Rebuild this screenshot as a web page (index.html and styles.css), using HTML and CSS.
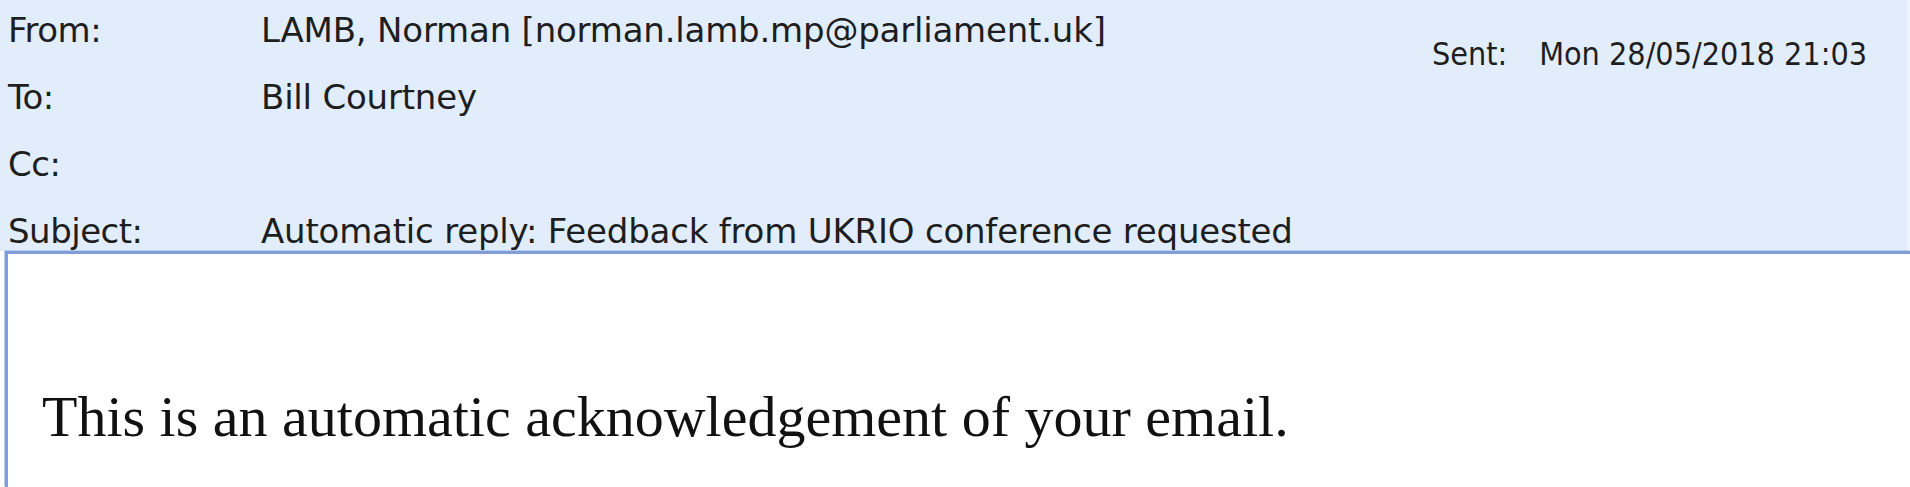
FILE: index.html
```html
<!DOCTYPE html>
<html lang="en">
<head>
    <meta charset="UTF-8">
    <title>Automatic reply: Feedback from UKRIO conference requested</title>
    <link rel="stylesheet" href="styles.css">
</head>
<body>

<div class="header">
    <div class="fields">
        <div class="row"><span class="label">From:</span><span class="value">LAMB, Norman [norman.lamb.mp@parliament.uk]</span></div>
        <div class="row"><span class="label">To:</span><span class="value">Bill Courtney</span></div>
        <div class="row"><span class="label">Cc:</span><span class="value"></span></div>
        <div class="row"><span class="label">Subject:</span><span class="value">Automatic reply: Feedback from UKRIO conference requested</span></div>
    </div>
    <div class="sent">
        <span class="label">Sent:</span>
        <span class="value">Mon 28/05/2018 21:03</span>
    </div>
</div>

<div class="message">
    <p>This is an automatic acknowledgement of your email.</p>
</div>

</body>
</html>
```

FILE: styles.css
```css
body {
    margin: 0;
    padding: 0;
    background-color: white;
    height: 100vh;
    display: flex;
    flex-direction: column;
    overflow: hidden;
}
.header {
    background-color: #e2edfc;
    display: flex;
    justify-content: space-between;
    color: #1e1e1e;
    border-right: 3px solid #edf3fd;
}
.fields {
    display: flex;
    flex-direction: column;
    gap: 27px;
    padding: 10px 0 0 8px;
    font-family: "DejaVu Sans", sans-serif;
    font-size: 34px;
    letter-spacing: -0.2px;
}
.row {
    display: flex;
    height: 40px;
    line-height: 40px;
}
.row .label {
    width: 253px;
    letter-spacing: -0.5px;
}
.sent {
    display: flex;
    gap: 32px;
    height: 40px;
    line-height: 40px;
    padding: 34px 40px 0 0;
    font-family: "DejaVu Sans Condensed", "DejaVu Sans", sans-serif;
    font-size: 32px;
}
.message {
    flex: 1;
    margin-left: 5px;
    border-top: 3px solid #7f9dd6;
    border-left: 3px solid #7f9dd6;
    box-shadow: -1px -1px 0 #b9cbee;
}
.message p {
    margin: 0;
    padding: 131px 0 0 34px;
    font-family: "Liberation Serif", "Times New Roman", serif;
    font-size: 58px;
    line-height: 64px;
    color: #111;
}
```
